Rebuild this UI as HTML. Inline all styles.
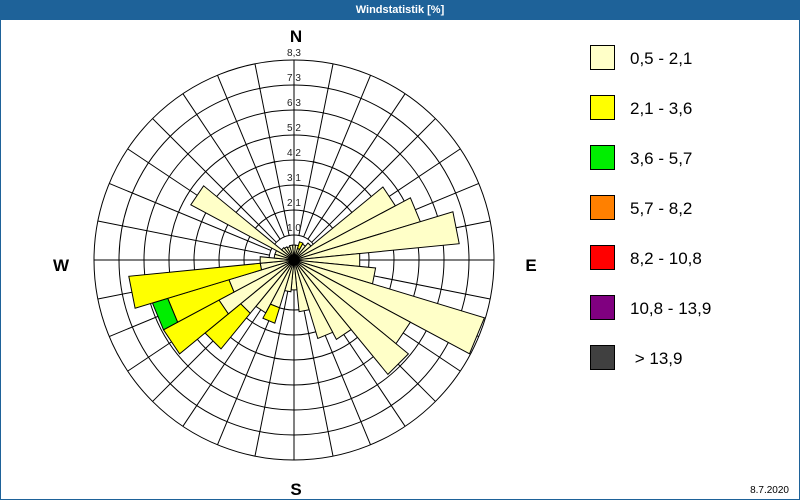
<!DOCTYPE html>
<html><head><meta charset="utf-8"><style>
html,body{margin:0;padding:0;background:#fff}
body{width:800px;height:500px;position:relative;overflow:hidden;font-family:"Liberation Sans",sans-serif}
.frame{position:absolute;left:0;top:0;width:798px;height:498px;border:1px solid #1e6299}
.title{position:absolute;left:0;top:0;width:800px;height:20px;background:#1e6299;color:#fff;font:bold 11px "Liberation Sans",sans-serif;text-align:center;line-height:20px}
.lg{position:absolute;left:590px;width:23px;height:23px;border:1px solid #000}
.lt{position:absolute;left:630px;font-size:17px;color:#000}
</style></head><body>
<div class="frame"></div>
<div class="title">Windstatistik [%]</div>
<svg id="s" width="800" height="500" style="position:absolute;left:0;top:0" xmlns="http://www.w3.org/2000/svg">
<g id="grid" fill="none" stroke="#000" stroke-width="1"></g>
<g id="bars" stroke="#000" stroke-width="1"></g>
<circle cx="294" cy="260" r="5" fill="#000"/>
<g font-family="Liberation Sans, sans-serif" font-size="10" fill="#222" text-anchor="middle">
<text x="294" y="56">8,3</text><text x="294" y="81">7,3</text><text x="294" y="106">6,3</text><text x="294" y="131">5,2</text>
<text x="294" y="156">4,2</text><text x="294" y="181">3,1</text><text x="294" y="206">2,1</text><text x="294" y="231">1,0</text>
</g>
<g font-family="Liberation Sans, sans-serif" font-size="17" font-weight="bold" fill="#000" text-anchor="middle">
<text x="296" y="42">N</text><text x="61" y="271">W</text><text x="531" y="271">E</text><text x="296" y="495">S</text>
</g>
<text x="789" y="493" font-family="Liberation Sans, sans-serif" font-size="10" text-anchor="end">8.7.2020</text>
</svg>
<div class="lg" style="top:45px;background:#ffffc8"></div><div class="lt" style="top:49px">0,5 - 2,1</div>
<div class="lg" style="top:95px;background:#ffff00"></div><div class="lt" style="top:99px">2,1 - 3,6</div>
<div class="lg" style="top:145px;background:#00ee00"></div><div class="lt" style="top:149px">3,6 - 5,7</div>
<div class="lg" style="top:195px;background:#ff8000"></div><div class="lt" style="top:199px">5,7 - 8,2</div>
<div class="lg" style="top:245px;background:#ff0000"></div><div class="lt" style="top:249px">8,2 - 10,8</div>
<div class="lg" style="top:295px;background:#800080"></div><div class="lt" style="top:299px">10,8 - 13,9</div>
<div class="lg" style="top:345px;background:#404040"></div><div class="lt" style="top:349px">&nbsp;&gt; 13,9</div>
<script>
var NS="http://www.w3.org/2000/svg",cx=294,cy=260;
function el(t,a,p){var e=document.createElementNS(NS,t);for(var k in a)e.setAttribute(k,a[k]);p.appendChild(e);return e;}
var g=document.getElementById('grid');
for(var k=1;k<=8;k++)el('circle',{cx:cx,cy:cy,r:25*k},g);
for(var i=0;i<32;i++){var a=i*11.25*Math.PI/180,r0=(i%8==0)?0:25;
el('line',{x1:cx+r0*Math.sin(a),y1:cy-r0*Math.cos(a),x2:cx+200*Math.sin(a),y2:cy-200*Math.cos(a)},g);}
var LY='#ffffc8',Y='#ffff00',G='#00ee00';
var data=[[0,[[15,LY]]],[11.25,[[15,LY]]],[22.5,[[12,LY],[19,Y]]],[33.75,[[18,LY]]],[45,[[22,LY]]],
[56.25,[[115,LY]]],[67.5,[[132,LY]]],[78.75,[[166,LY]]],[90,[[66,LY]]],[101.25,[[82,LY]]],[112.5,[[199,LY]]],
[123.75,[[132,LY]]],[135,[[148,LY]]],[146.25,[[90,LY]]],[157.5,[[82,LY]]],[168.75,[[52,LY]]],[180,[[30,LY]]],
[191.25,[[32,LY]]],[202.5,[[50,LY],[66,Y]]],[213.75,[[60,LY]]],[225,[[69,LY],[115,Y]]],[236.25,[[85,LY],[148,Y]]],
[247.5,[[68,LY],[132,Y],[148,G]]],[258.75,[[34,LY],[166,Y]]],[270,[[34,LY]]],[281.25,[[20,LY]]],[292.5,[[20,LY]]],
[303.75,[[117,LY]]],[315,[[16,LY]]],[326.25,[[15,LY]]],[337.5,[[14,LY]]],[348.75,[[15,LY]]]];
var b=document.getElementById('bars');
data.forEach(function(d){var c=d[0]*Math.PI/180,h=5.625*Math.PI/180,prev=0;
d[1].forEach(function(s){var r1=prev,r2=s[0];
function P(r,a){return (cx+r*Math.sin(a)).toFixed(1)+','+(cy-r*Math.cos(a)).toFixed(1);}
var pts=[P(r1,c-h),P(r2,c-h),P(r2,c+h),P(r1,c+h)].join(' ');
el('polygon',{points:pts,fill:s[1]},b);prev=r2;});});
</script>
</body></html>
